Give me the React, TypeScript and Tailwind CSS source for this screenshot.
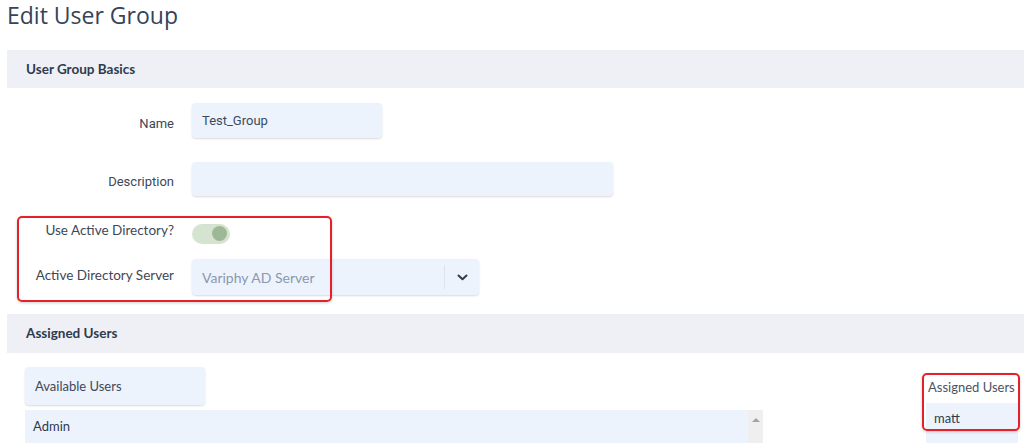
import React from 'react';

function Chevron() {
  return (
    <svg width="11" height="7" viewBox="0 0 11 7" fill="none">
      <path d="M1.5 1.5 L5.5 5.2 L9.5 1.5" stroke="#2f3a4c" strokeWidth="2" strokeLinecap="round" strokeLinejoin="round" />
    </svg>
  );
}

function SectionHeader({ title }: { title: string }) {
  return (
    <div className="ml-[7px] flex items-center bg-[#eef0f6] pl-[19px] font-[Lato] text-[13.5px] font-bold text-[#2f3a4c]">
      {title}
    </div>
  );
}

function FormRow({
  label,
  children,
  className,
  labelClass = '',
}: {
  label: string;
  children: React.ReactNode;
  className: string;
  labelClass?: string;
}) {
  return (
    <div className={`flex items-center ${className}`}>
      <div className={`w-[174px] shrink-0 text-right ${labelClass}`}>{label}</div>
      <div className="ml-[18px] flex">{children}</div>
    </div>
  );
}

export default function App() {
  return (
    <div className="relative h-[443px] w-[1024px] overflow-hidden bg-white font-[Lato] text-[13.5px] text-[#3d4757]">
      <h1 className="pl-[7px] font-['Open_Sans'] text-[23px] leading-[30px] text-[#34445a]">Edit User Group</h1>

      <div className="mt-[20px]">
        <div className="h-[38px] [&>div]:h-full">
          <SectionHeader title="User Group Basics" />
        </div>

        <FormRow label="Name" className="mt-[15px] h-[35px]" labelClass="pt-[6px] font-['Roboto'] text-[13px]">
          <div className="flex h-[35px] w-[190px] items-center rounded-[4px] bg-[#edf3fd] pl-[10px] font-['Roboto'] text-[13px] text-[#3b4a5e] shadow-[0_1px_2px_rgba(0,0,0,0.15)]">
            Test_Group
          </div>
        </FormRow>

        <FormRow label="Description" className="mt-[24px] h-[34px]" labelClass="pt-[6px] font-['Roboto'] text-[13px]">
          <div className="h-[34px] w-[421px] rounded-[4px] bg-[#edf3fd] shadow-[0_1px_2px_rgba(0,0,0,0.15)]" />
        </FormRow>

        <FormRow label="Use Active Directory?" className="mt-[26px] h-[20px]" labelClass="pb-[3px]">
          <div className="mt-[3px] flex h-[20px] w-[38px] items-center justify-end rounded-full bg-[#d5e4d1] pr-[3px]">
            <div className="h-[15px] w-[15px] rounded-full bg-[#9db896]" />
          </div>
        </FormRow>

        <FormRow label="Active Directory Server" className="mt-[17px] h-[36px]" labelClass="pb-[3px]">
          <div className="flex h-[36px] w-[287px] items-center rounded-[4px] bg-[#edf3fd] shadow-[0_1px_2px_rgba(0,0,0,0.15)]">
            <div className="flex-1 pl-[10px] text-[14px] text-[#8b98ae]">Variphy AD Server</div>
            <div className="h-[24px] w-px bg-[#dce3ec]" />
            <div className="flex w-[34px] items-center justify-center">
              <Chevron />
            </div>
          </div>
        </FormRow>

        <div className="mt-[19px] h-[39px] [&>div]:h-full">
          <SectionHeader title="Assigned Users" />
        </div>

        <div className="flex">
          <div className="ml-[25px] mt-[14px] flex flex-col">
            <div className="flex h-[38px] w-[180px] items-center rounded-[4px] bg-[#edf3fd] pl-[10px] pt-[2px] text-[13px] text-[#3d4757] shadow-[0_1px_2px_rgba(0,0,0,0.15)]">
              Available Users
            </div>
            <div className="mt-[5px] flex h-[60px] w-[738px]">
              <div className="flex-1 bg-[#edf3fd] pl-[8px] pt-[7px] text-[13px] text-[#2f3a4c]">Admin</div>
              <div className="flex w-[15px] justify-center bg-[#efefef] pt-[8px]">
                <div className="h-0 w-0 border-x-[4px] border-b-[4px] border-x-transparent border-b-[#a3a3a3]" />
              </div>
            </div>
          </div>

          <div className="ml-auto mr-[6px] mt-[26px] flex w-[92px] flex-col">
            <div className="pl-[2px] text-[13px] leading-[16px] text-[#4a5465]">Assigned Users</div>
            <div className="mt-[8px] h-[60px] bg-[#edf3fd] pl-[8px] pt-[6px] text-[13px] leading-[18px] text-[#2f3a4c]">matt</div>
          </div>
        </div>
      </div>

      <div className="absolute left-[17px] top-[216px] h-[86px] w-[315px] rounded-[5px] border-2 border-[#e4202a] shadow-[0_1px_3px_rgba(0,0,0,0.2)]" />
      <div className="absolute left-[922px] top-[373px] h-[58px] w-[98px] rounded-[5px] border-2 border-[#e4202a] shadow-[0_1px_3px_rgba(0,0,0,0.2)]" />
    </div>
  );
}
